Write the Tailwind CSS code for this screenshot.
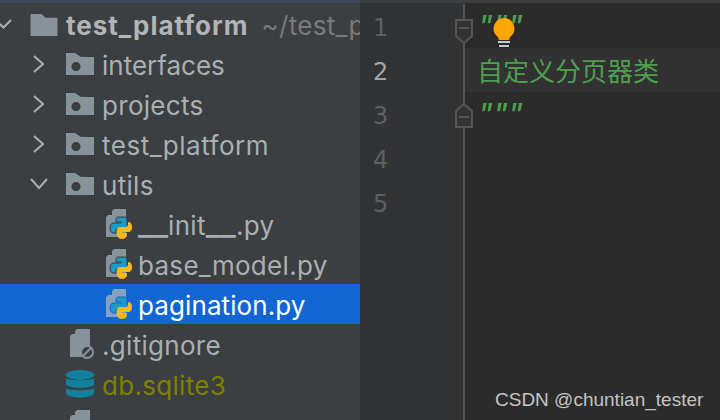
<!doctype html>
<html lang="zh">
  <head>
    <meta charset="UTF-8" />
    <title>test_platform</title>
    <script src="https://cdn.jsdelivr.net/npm/@tailwindcss/browser@4"></script>
  </head>
  <body class="bg-[#2b2b2b]">
    <div class="relative flex w-[720px] h-[420px] overflow-hidden font-['Inter','Liberation_Sans',sans-serif]">
      <!-- project tree -->
      <div class="w-[360px] h-full shrink-0 bg-[#3c3f41] pt-[1px] overflow-hidden border-t-[3px] border-[#3d4b5c] text-[26px] leading-[40px] text-[#a9b0b3] tracking-[0.3px] whitespace-nowrap">
        <div class="flex items-center h-[40px] pl-0">
          <svg class="w-[12px] h-[12px] mr-[18px] shrink-0" viewBox="0 0 12 12" fill="none" stroke="#a9b0b3" stroke-width="2"><path d="M0 6l3.5 3.5L11 2" /></svg>
          <svg class="w-[28px] h-[23px] mr-[8px] shrink-0" viewBox="0 0 28 24" fill="#87939a"><path d="M0 1h11l5 4h12v19H0z" /></svg>
          <span class="pt-[3px] font-bold text-[#b2b5b7] tracking-[1px]">test_platform</span>
          <span class="pt-[3px] ml-[13px] text-[#777a7c]">~/test_platform</span>
        </div>
        <div class="flex items-center h-[40px] pl-[33px]">
          <svg class="w-[12px] h-[18px] mr-[21px] shrink-0" viewBox="0 0 12 18" fill="none" stroke="#a9b0b3" stroke-width="2"><path d="M1 1l9 8-9 8" /></svg>
          <svg class="w-[28px] h-[22px] mr-[8px] shrink-0" viewBox="0 0 28 22"><path fill="#87939a" fill-rule="evenodd" d="M0 0h9l6 4h13v18H0z M10 9a4.500 4.500 0 1 0 .01 0z" /></svg>
          <span class="pt-[3px] tracking-normal">interfaces</span>
        </div>
        <div class="flex items-center h-[40px] pl-[33px]">
          <svg class="w-[12px] h-[18px] mr-[21px] shrink-0" viewBox="0 0 12 18" fill="none" stroke="#a9b0b3" stroke-width="2"><path d="M1 1l9 8-9 8" /></svg>
          <svg class="w-[28px] h-[22px] mr-[8px] shrink-0" viewBox="0 0 28 22"><path fill="#87939a" fill-rule="evenodd" d="M0 0h9l6 4h13v18H0z M10 9a4.500 4.500 0 1 0 .01 0z" /></svg>
          <span class="pt-[3px]">projects</span>
        </div>
        <div class="flex items-center h-[40px] pl-[33px]">
          <svg class="w-[12px] h-[18px] mr-[21px] shrink-0" viewBox="0 0 12 18" fill="none" stroke="#a9b0b3" stroke-width="2"><path d="M1 1l9 8-9 8" /></svg>
          <svg class="w-[28px] h-[22px] mr-[8px] shrink-0" viewBox="0 0 28 22"><path fill="#87939a" fill-rule="evenodd" d="M0 0h9l6 4h13v18H0z M10 9a4.500 4.500 0 1 0 .01 0z" /></svg>
          <span class="pt-[3px] tracking-[0.5px]">test_platform</span>
        </div>
        <div class="flex items-center h-[40px] pl-[30px]">
          <svg class="w-[18px] h-[12px] mr-[18px] shrink-0" viewBox="0 0 18 12" fill="none" stroke="#a9b0b3" stroke-width="2"><path d="M1 1l8 9 8-9" /></svg>
          <svg class="w-[28px] h-[22px] mr-[8px] shrink-0" viewBox="0 0 28 22"><path fill="#87939a" fill-rule="evenodd" d="M0 0h9l6 4h13v18H0z M10 9a4.500 4.500 0 1 0 .01 0z" /></svg>
          <span class="pt-[3px]">utils</span>
        </div>
        <div class="flex items-center h-[40px] pl-[106px]">
          <svg class="w-[26px] h-[30px] mr-[6px] shrink-0" viewBox="0 0 26 30"><path fill="#87939a" d="M8 0h12v28H0V8z" /><path fill="#3c3f41" d="M6 0v6H0V8z" /><path fill="#1b9ac4" stroke="#3c3f41" stroke-width="1" d="M12 8h6c2 0 3 1 3 3v5c0 2-1 3-3 3h-5c-2 0-3 1-3 3v2H8c-3 0-4-2-4-5s1-5 4-5h7v-1h-5v-2c0-2 1-3 2-3z" /><path fill="#f5b71c" d="M22 13c3 0 4 2 4 5s-1 5-4 5h-6v1h5v2c0 2-2 4-5 4s-5-2-5-4v-5c0-2 1-3 3-3h5c2 0 3-1 3-3z" /></svg>
          <span class="pt-[3px]"><span class="text-[33px] leading-none tracking-normal">__</span>init<span class="text-[33px] leading-none tracking-normal">__</span>.py</span>
        </div>
        <div class="flex items-center h-[40px] pl-[106px]">
          <svg class="w-[26px] h-[30px] mr-[6px] shrink-0" viewBox="0 0 26 30"><path fill="#87939a" d="M8 0h12v28H0V8z" /><path fill="#3c3f41" d="M6 0v6H0V8z" /><path fill="#1b9ac4" stroke="#3c3f41" stroke-width="1" d="M12 8h6c2 0 3 1 3 3v5c0 2-1 3-3 3h-5c-2 0-3 1-3 3v2H8c-3 0-4-2-4-5s1-5 4-5h7v-1h-5v-2c0-2 1-3 2-3z" /><path fill="#f5b71c" d="M22 13c3 0 4 2 4 5s-1 5-4 5h-6v1h5v2c0 2-2 4-5 4s-5-2-5-4v-5c0-2 1-3 3-3h5c2 0 3-1 3-3z" /></svg>
          <span class="pt-[3px]">base_model.py</span>
        </div>
        <div class="flex items-center h-[40px] pl-[106px] bg-[#1166d3] text-white">
          <svg class="w-[26px] h-[30px] mr-[6px] shrink-0" viewBox="0 0 26 30"><path fill="#87a0bd" d="M8 0h12v28H0V8z" /><path fill="#1166d3" d="M6 0v6H0V8z" /><path fill="#1b9ac4" stroke="#1166d3" stroke-width="1" d="M12 8h6c2 0 3 1 3 3v5c0 2-1 3-3 3h-5c-2 0-3 1-3 3v2H8c-3 0-4-2-4-5s1-5 4-5h7v-1h-5v-2c0-2 1-3 2-3z" /><path fill="#f5b71c" d="M22 13c3 0 4 2 4 5s-1 5-4 5h-6v1h5v2c0 2-2 4-5 4s-5-2-5-4v-5c0-2 1-3 3-3h5c2 0 3-1 3-3z" /></svg>
          <span class="pt-[3px] tracking-[0.1px]">pagination.py</span>
        </div>
        <div class="flex items-center h-[40px] pl-[70px]">
          <svg class="w-[25px] h-[30px] mr-[7px] shrink-0" viewBox="0 0 25 30"><path fill="#87939a" d="M7 0h13v17a8 8 0 0 0-8 11H0V7z" /><path fill="#3c3f41" d="M5 0v5H0z" /><g fill="none" stroke="#87939a" stroke-width="2"><circle cx="17" cy="23" r="6" /><path d="M13 27l8-8" /></g></svg>
          <span class="pt-[3px]">.gitignore</span>
        </div>
        <div class="flex items-center h-[40px] pl-[66px]">
          <svg class="w-[28px] h-[28px] mr-[8px] shrink-0" viewBox="0 0 28 28" fill="#12809f"><ellipse cx="14" cy="5" rx="14" ry="5" /><path d="M0 8c3 3 25 3 28 0v6c0 5-28 5-28 0zM0 18c3 3 25 3 28 0v5c0 6-28 6-28 0z" /></svg>
          <span class="pt-[3px] text-[#808000]">db.sqlite3</span>
        </div>
        <div class="flex items-start h-[40px] pl-[70px] pt-[6px]">
          <svg class="w-[25px] h-[30px] mr-[7px] shrink-0" viewBox="0 0 25 30"><path fill="#87939a" d="M7 0h13v17a8 8 0 0 0-8 11H0V7z" /><path fill="#3c3f41" d="M5 0v5H0z" /></svg>
          <span class="pt-[3px] leading-[26px] text-[#7f8588]">manage.py</span>
        </div>
      </div>

      <!-- gutter -->
      <div class="w-[105px] h-full shrink-0 bg-[#313335] border-t-[3px] border-[#3c3f41] pt-[3px] relative text-[24px] leading-[44px] text-[#5d6163] font-['DejaVu_Sans',sans-serif]">
        <div class="h-[44px] pl-[13px]">1</div>
        <div class="h-[44px] pl-[13px] text-[#a4a3a3]">2</div>
        <div class="h-[44px] pl-[13px]">3</div>
        <div class="h-[44px] pl-[13px]">4</div>
        <div class="h-[44px] pl-[13px]">5</div>
        <div class="absolute left-[103px] top-[1px] bottom-0 w-[2px] bg-[#555555]"></div>
        <svg class="absolute left-[95px] top-[16px] w-[18px] h-[26px]" viewBox="0 0 18 26" fill="#313335" stroke="#555555" stroke-width="2"><path d="M1 1h16v16l-8 7-8-7z" /><path d="M4 9h10" /></svg>
        <svg class="absolute left-[95px] top-[99px] w-[18px] h-[26px]" viewBox="0 0 18 26" fill="#313335" stroke="#555555" stroke-width="2"><path d="M1 25h16V9L9 2 1 9z" /><path d="M4 15h10" /></svg>
      </div>

      <!-- editor -->
      <div class="flex-1 h-full border-t-[3px] border-[#3c3f41] pt-[1px] text-[25px] leading-[44px] text-[#4f9e4f] font-['Liberation_Mono','Noto_Sans_CJK_SC',monospace]">
        <div class="h-[44px] pl-[13px] pt-[2px] italic font-bold">"""</div>
        <div class="h-[44px] pl-[12px] bg-[#323232] text-[26px] font-['Noto_Sans_CJK_SC',sans-serif] leading-[44px]">自定义分页器类</div>
        <div class="h-[44px] pl-[13px] pt-[2px] italic font-bold">"""</div>
      </div>

      <!-- intention bulb -->
      <svg class="absolute left-[493px] top-[17px] w-[22px] h-[30px]" viewBox="0 0 22 30">
        <path fill="#ffa500" d="M11 1a10.500 10.500 0 0 1 6 19l-1 3H6l-1-3a10.500 10.500 0 0 1 6-19z" />
        <path stroke="#c8c8c8" stroke-width="2" d="M5 25h12M6 29h10" />
      </svg>

      <!-- watermark -->
      <div class="absolute left-[495px] top-[388px] text-[19px] leading-[24px] text-[#c4c4c4] font-['Liberation_Sans',sans-serif]">CSDN @chuntian_tester</div>
    </div>
  </body>
</html>
